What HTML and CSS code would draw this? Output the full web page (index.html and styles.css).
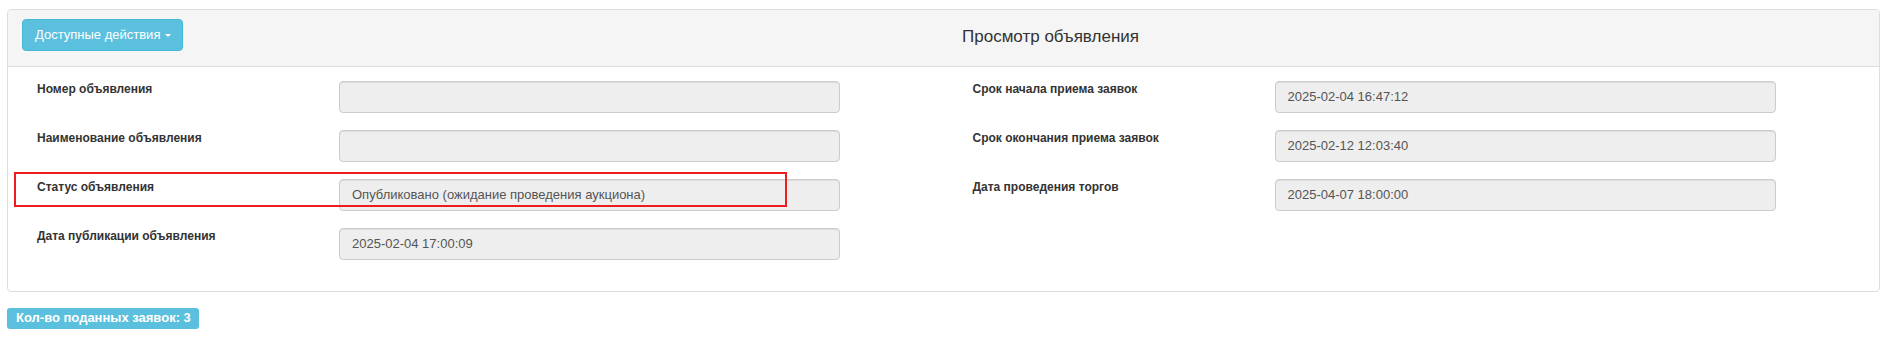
FILE: index.html
```html
<!DOCTYPE html>
<html lang="ru">
<head>
    <meta charset="UTF-8">
    <title>Просмотр объявления</title>
    <link rel="stylesheet" href="styles.css">
</head>
<body>

<div class="page">

    <div class="panel">
        <div class="panel-heading">
            <button class="btn-info" type="button">Доступные действия <span class="caret"></span></button>
            <div class="panel-title">Просмотр объявления</div>
        </div>

        <div class="panel-body">
            <!-- левая колонка -->
            <div class="col">
                <div class="field">
                    <label>Номер объявления</label>
                    <div class="input"></div>
                </div>
                <div class="field">
                    <label>Наименование объявления</label>
                    <div class="input"></div>
                </div>
                <div class="field marked">
                    <div class="highlight"></div>
                    <label>Статус объявления</label>
                    <div class="input">Опубликовано (ожидание проведения аукциона)</div>
                </div>
                <div class="field">
                    <label>Дата публикации объявления</label>
                    <div class="input">2025-02-04 17:00:09</div>
                </div>
            </div>

            <!-- правая колонка -->
            <div class="col">
                <div class="field">
                    <label>Срок начала приема заявок</label>
                    <div class="input">2025-02-04 16:47:12</div>
                </div>
                <div class="field">
                    <label>Срок окончания приема заявок</label>
                    <div class="input">2025-02-12 12:03:40</div>
                </div>
                <div class="field">
                    <label>Дата проведения торгов</label>
                    <div class="input">2025-04-07 18:00:00</div>
                </div>
            </div>
        </div>
    </div>

    <span class="label-info">Кол-во поданных заявок: 3</span>

</div>

</body>
</html>
```

FILE: styles.css
```css
body {
    margin: 0;
    font-family: 'Liberation Sans', Arial, sans-serif;
    font-size: 13px;
    color: #333;
    background-color: #fff;
}
.page {
    padding: 9px 7px 0 7px;
}
.panel {
    border: 1px solid #ddd;
    border-radius: 4px;
    margin-bottom: 16px;
    background-color: #fff;
}
.panel-heading {
    display: flex;
    align-items: flex-start;
    padding: 9px 14px 15px 14px;
    background-color: #f5f5f5;
    border-bottom: 1px solid #ddd;
    border-radius: 3px 3px 0 0;
}
.btn-info {
    font-family: 'Liberation Sans', Arial, sans-serif;
    font-size: 13px;
    line-height: 18px;
    height: 32px;
    padding: 6px 11px 6px 12px;
    color: #fff;
    background-color: #5bc0de;
    border: 1px solid #46b8da;
    border-radius: 4px;
    cursor: pointer;
}
.caret {
    display: inline-block;
    width: 0;
    height: 0;
    margin-left: 1px;
    vertical-align: middle;
    border-top: 3px solid #fff;
    border-left: 3px solid transparent;
    border-right: 3px solid transparent;
}
.panel-title {
    flex: 1;
    text-align: center;
    font-size: 17px;
    line-height: 24px;
    margin-top: 6px;
    padding-left: 53px;
    color: #333;
}
.panel-body {
    display: grid;
    grid-template-columns: 1fr 1fr;
    padding: 14px 0 31px 0;
}
.col {
    display: flex;
    flex-direction: column;
    gap: 17px;
    padding-left: 29px;
}
.field {
    display: flex;
    align-items: flex-start;
}
.field label {
    flex: none;
    width: 302px;
    font-size: 12px;
    line-height: 17px;
    font-weight: bold;
    color: #333;
}
.input {
    box-sizing: border-box;
    width: 501px;
    height: 32px;
    padding: 6px 12px;
    font-size: 13px;
    line-height: 18px;
    color: #555;
    background-color: #eee;
    border: 1px solid #ccc;
    border-radius: 4px;
    box-shadow: inset 0 1px 1px rgba(0,0,0,0.075);
}
.marked {
    position: relative;
}
/* красная рамка поверх строки статуса */
.highlight {
    position: absolute;
    left: -23px;
    top: -7px;
    width: 773px;
    height: 35px;
    box-sizing: border-box;
    border: 2px solid #ee1c1c;
    pointer-events: none;
}
.label-info {
    display: inline-block;
    padding: 3px 8px 4px 9px;
    font-size: 13px;
    line-height: 14px;
    font-weight: bold;
    color: #fff;
    background-color: #5bc0de;
    border-radius: 3px;
}
```
